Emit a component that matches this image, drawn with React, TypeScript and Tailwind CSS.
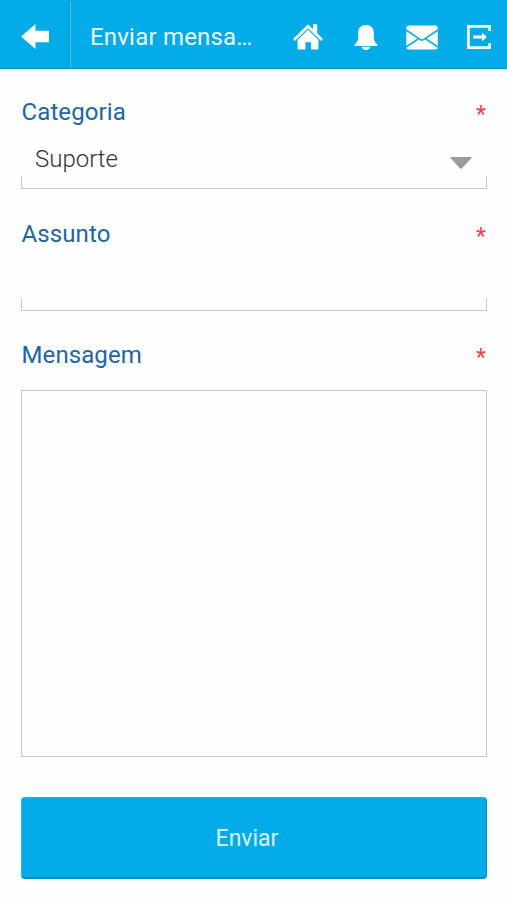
import React from 'react';

const BackIcon = () => (
  <svg className="w-7 h-[25px]" viewBox="0 0 28 25" fill="currentColor">
    <path d="M14.5 0v6.8H28v11.4H14.5V25L0 12.5z" />
  </svg>
);

const HomeIcon = () => (
  <svg className="w-[30px] h-[26px]" viewBox="0 0 30 26" fill="currentColor">
    <path d="M15 0.3 20 5.2V0.3h4.2v9l5.8 5.8-1.9 1.8L15 4.2 1.9 16.9 0 15.1z" />
    <path d="M15 5.7 25.4 15.9V25.5H18v-7.3h-5.6v7.3H4.6V15.9z" />
  </svg>
);

const BellIcon = () => (
  <svg className="ml-0.5 w-6 h-[25px]" viewBox="0 0 24 25" fill="currentColor">
    <path d="M12 0c5 0 7.8 3 7.8 7.5v4.300c0 3.600 1 5.600 3.600 7.600v1.500H.6v-1.500c2.600-2 3.600-4 3.600-7.600V7.500C4.200 3 7 0 12 0z" />
    <path d="M7.500 21.800h9c-.6 2-2.200 3.200-4.500 3.200s-3.900-1.200-4.500-3.200z" />
  </svg>
);

const MailIcon = () => (
  <svg className="w-8 h-[25px]" viewBox="0 0 32 25">
    <rect x="0.3" y="0.5" width="31.4" height="24" rx="2.5" fill="currentColor" />
    <path
      d="M0 5 14.500 14.600q1.500 1 3 0L32 5M0 22 13 13.300M32 22 19 13.300"
      fill="none"
      stroke="#03abe8"
      strokeWidth="1.6"
    />
  </svg>
);

const LogoutIcon = () => (
  <svg className="w-6 h-6" viewBox="0 0 24 24">
    <path d="M22.700 6V1.400H1.400v21.200h21.300V18" fill="none" stroke="currentColor" strokeWidth="2.700" />
    <path d="M6 10.500h9V7.500l4.800 4.500-4.800 4.500v-3H6z" fill="currentColor" />
  </svg>
);

interface FieldLabelProps {
  children: React.ReactNode;
}

const FieldLabel: React.FC<FieldLabelProps> = ({ children }) => (
  <div className="flex h-8 justify-between text-2xl leading-8 text-[#1c66a5]">
    <span className="-mt-px pl-[0.5px] tracking-[0.1px]">{children}</span>
    <span className="pr-px pt-0.5 text-[23px] text-[#f04343]">*</span>
  </div>
);

interface UnderlinedFieldProps {
  children?: React.ReactNode;
}

const UnderlinedField: React.FC<UnderlinedFieldProps> = ({ children }) => (
  <div className="flex h-[61px] flex-col">
    <div className="flex h-12 items-center justify-between pl-[14px] pr-[15px]">{children}</div>
    <div className="-mt-px h-[13px] border-x border-b border-[#c8c8c8]"></div>
  </div>
);

const App: React.FC = () => {
  return (
    <div className="flex h-[900px] w-[507px] flex-col bg-[#fefefe] font-['Roboto',sans-serif]">
      <header className="flex h-[69px] shrink-0 border-b border-[#0c8fbf] bg-[#03abe8] text-white">
        <button className="flex w-[69px] items-center justify-center pt-[5px]" aria-label="Voltar">
          <BackIcon />
        </button>
        <div className="mt-0.5 w-0.5 border-l border-r border-l-[#0799cf] border-r-[#52c3ef]"></div>
        <h1 className="w-[202px] truncate pl-[19px] text-2xl leading-[74px] tracking-[0.2px] text-[#effaff]">
          Enviar mensa…
        </h1>
        <nav className="flex flex-1 items-center justify-between pl-5 pr-4 pt-1.5">
          <HomeIcon />
          <BellIcon />
          <MailIcon />
          <LogoutIcon />
        </nav>
      </header>

      <main className="flex flex-col pl-[21px] pr-5 pt-7">
        <FieldLabel>Categoria</FieldLabel>
        <UnderlinedField>
          <span className="pt-3 text-2xl font-light leading-8 text-[#333333]">Suporte</span>
          <svg className="mt-5 h-3 w-[22px]" viewBox="0 0 22 12" fill="#9b9b9b">
            <path d="M1 0h20q1 .5.500 1L12 11.300q-1 1-2 0L.5 1Q0 .5 1 0z" />
          </svg>
        </UnderlinedField>

        <div className="h-[29px]"></div>
        <FieldLabel>Assunto</FieldLabel>
        <UnderlinedField />

        <div className="h-7"></div>
        <FieldLabel>Mensagem</FieldLabel>
        <div className="mt-[18px] h-[367px] border border-[#c8c8c8]"></div>

        <button className="mt-10 h-[82px] rounded border border-[#20b3e9] border-b-2 border-b-[#078fc3] border-r-[#078fc3] bg-[#03abe8] pr-[14px] pt-[3px] text-[23px] text-[#d8f3fd]">
          Enviar
        </button>
      </main>
    </div>
  );
};

export default App;
